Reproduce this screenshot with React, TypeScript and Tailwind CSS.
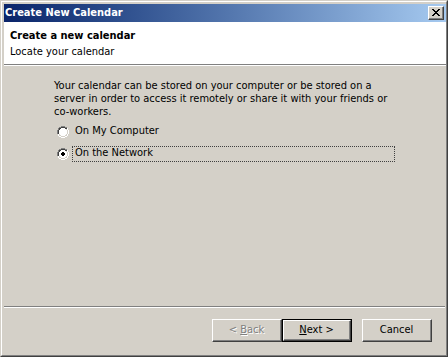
import React from "react";

const font = { fontFamily: '"DejaVu Sans Condensed", "Liberation Sans", sans-serif' };

function Radio({ checked }: { checked: boolean }) {
  return (
    <svg width="12" height="12" viewBox="0 0 12 12" className="shrink-0">
      <path d="M4 0h4v1H4zM2 1h2v1H2zM8 1h2v1H8zM1 2h1v2H1zM0 4h1v4H0z" fill="#808080" />
      <path d="M4 1h4v1H4zM2 2h2v1H2zM8 2h2v1H8zM1 4h1v4H1zM2 3h1v1H2z" fill="#404040" />
      <path d="M10 2h1v2h-1zM11 4h1v4h-1zM10 8h1v2h-1zM8 10h2v1H8zM2 10h2v1H2zM4 11h4v1H4zM1 8h1v2H1z" fill="#ffffff" />
      <path d="M10 4h1v4h-1zM9 8h1v2H9zM8 9h1v1H8zM4 10h4v1H4zM2 8h1v2H2zM3 9h1v1H3zM9 3h1v1H9z" fill="#d4d0c8" />
      <path d="M4 2h4v1H4zM3 3h6v1H3zM2 4h8v4H2zM3 8h6v1H3zM4 9h4v1H4z" fill="#ffffff" />
      {checked && <path d="M5 4h2v1H5zM4 5h4v2H4zM5 7h2v1H5z" fill="#000000" />}
    </svg>
  );
}

function Btn({ children, def }: { children: React.ReactNode; def?: boolean }) {
  const inner = (
    <div className="h-full w-full border-t border-l border-r border-b border-t-white border-l-white border-r-[#404040] border-b-[#404040]">
      <div className="flex h-full w-full items-center justify-center border-r border-b border-r-[#808080] border-b-[#808080] bg-[#d4d0c8] text-[11px]">
        {children}
      </div>
    </div>
  );
  if (def) {
    return <div className="h-[23px] w-[70px] border border-black">{inner}</div>;
  }
  return <div className="h-[23px] w-[70px]">{inner}</div>;
}

export default function App() {
  return (
    <div
      className="h-[357px] w-[448px] overflow-hidden border-t border-l border-r border-b border-t-[#d4d0c8] border-l-[#d4d0c8] border-r-[#404040] border-b-[#404040] text-black"
      style={font}
    >
      <div className="flex h-full w-full flex-col border-t border-l border-r border-b border-t-white border-l-white border-r-[#808080] border-b-[#808080] bg-[#d4d0c8] pt-[2px] pl-[2px]">
        {/* Title bar */}
        <div className="flex h-[18px] items-center bg-gradient-to-r from-[#0a246a] to-[#a6caf0] pr-[2px] pl-[1px]">
          <span className="flex-1 text-[11px] font-bold text-white">Create New Calendar</span>
          <div className="h-[14px] w-[16px] border-t border-l border-r border-b border-t-white border-l-white border-r-[#404040] border-b-[#404040]">
            <div className="flex h-full w-full items-center justify-center border-r border-b border-r-[#808080] border-b-[#808080] bg-[#d4d0c8]">
              <svg width="8" height="7" viewBox="0 0 8 7">
                <path d="M0 0h2v1H0zM6 0h2v1H6zM1 1h2v1H1zM5 1h2v1H5zM2 2h4v1H2zM3 3h2v1H3zM2 4h4v1H2zM1 5h2v1H1zM5 5h2v1H5zM0 6h2v1H0zM6 6h2v1H6z" fill="#000" />
              </svg>
            </div>
          </div>
        </div>
        {/* Header */}
        <div className="h-[43px] border-b border-b-[#808080] bg-white pt-[7px] pl-[6px]">
          <div className="text-[11px] leading-[14px] font-bold">Create a new calendar</div>
          <div className="mt-[2px] text-[11px] leading-[14px]">Locate your calendar</div>
        </div>
        <div className="border-t border-t-white" />
        {/* Body */}
        <div className="flex-1 pt-[13px] pl-[50px]">
          <p className="text-[11px] leading-[13px]">
            Your calendar can be stored on your computer or be stored on a
            <br />
            server in order to access it remotely or share it with your friends or
            <br />
            co-workers.
          </p>
          <div className="mt-[5px] flex h-[17px] items-center pl-[3px]">
            <Radio checked={false} />
            <span className="ml-[4px] px-[2px] text-[11px]">On My Computer</span>
          </div>
          <div className="mt-[5px] flex h-[17px] items-center pl-[3px]">
            <Radio checked={true} />
            <div className="ml-[3px] flex h-[16px] w-[323px] items-center border border-dotted border-[#404040] px-[2px] text-[11px]">
              On the Network
            </div>
          </div>
        </div>
        {/* Separator */}
        <div className="mr-[1px] border-t border-t-[#808080]" />
        <div className="mr-[1px] border-t border-t-white" />
        <div className="flex h-[47px] items-start justify-end pt-[11px] pr-[14px]">
          <Btn>
            <span className="text-[#808080] [text-shadow:1px_1px_0_#fff]">
              &lt; <u>B</u>ack
            </span>
          </Btn>
          <Btn def>
            <span>
              <u>N</u>ext &gt;
            </span>
          </Btn>
          <div className="w-[10px]" />
          <Btn>Cancel</Btn>
        </div>
      </div>
    </div>
  );
}
